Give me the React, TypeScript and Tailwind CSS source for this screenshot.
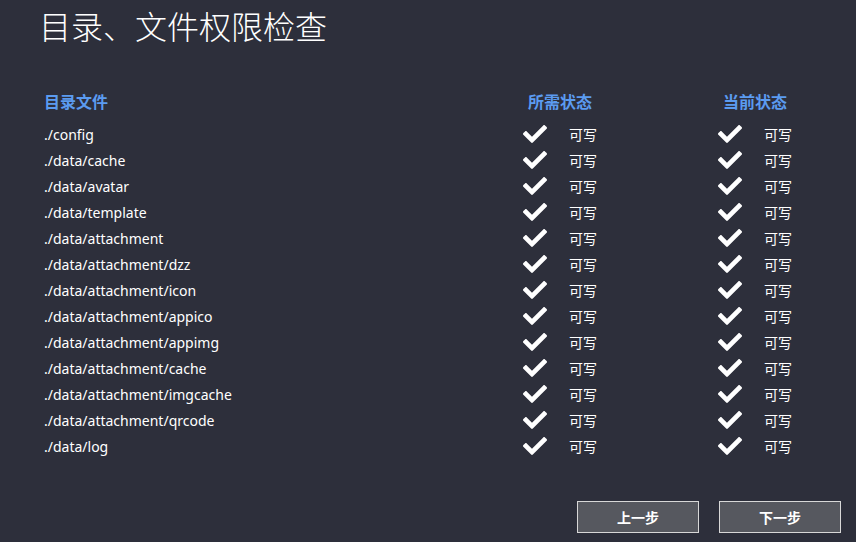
import React from "react";
import { FaCheck } from "react-icons/fa";

const files = [
  "./config",
  "./data/cache",
  "./data/avatar",
  "./data/template",
  "./data/attachment",
  "./data/attachment/dzz",
  "./data/attachment/icon",
  "./data/attachment/appico",
  "./data/attachment/appimg",
  "./data/attachment/cache",
  "./data/attachment/imgcache",
  "./data/attachment/qrcode",
  "./data/log",
];

function Status() {
  return (
    <div className="flex items-center">
      <FaCheck className="w-[24px] h-[24px] text-white" />
      <span className="ml-[22px] text-[14px] text-white">可写</span>
    </div>
  );
}

export default function App() {
  return (
    <div
      className="w-[856px] h-[542px] bg-[#2d2f3b] text-white overflow-hidden flex flex-col"
      style={{ fontFamily: '"Noto Sans", "Noto Sans CJK SC", sans-serif' }}
    >
      <h1 className="ml-[39px] mt-[7px] text-[32px] leading-[40px] font-light text-white">
        目录、文件权限检查
      </h1>
      <div className="ml-[44px] mt-[43px] grid grid-cols-[479px_195px_1fr]">
        <div className="h-[24px] leading-[24px] text-[16px] font-bold text-[#5b9bf0]">目录文件</div>
        <div className="h-[24px] leading-[24px] pl-[5px] text-[16px] font-bold text-[#5b9bf0]">所需状态</div>
        <div className="h-[24px] leading-[24px] pl-[5px] text-[16px] font-bold text-[#5b9bf0]">当前状态</div>
      </div>
      <div className="ml-[44px] mt-[7px] flex flex-col">
        {files.map((f) => (
          <div key={f} className="grid grid-cols-[479px_195px_1fr] h-[26px] items-center">
            <div className="text-[14px] text-white">{f}</div>
            <Status />
            <Status />
          </div>
        ))}
      </div>
      <div className="mt-[42px] mr-[15px] flex justify-end gap-[20px]">
        <button className="w-[122px] h-[32px] bg-[#56585f] border border-[#d8d8d8] text-[14px] font-bold text-white">
          上一步
        </button>
        <button className="w-[122px] h-[32px] bg-[#56585f] border border-[#d8d8d8] text-[14px] font-bold text-white">
          下一步
        </button>
      </div>
    </div>
  );
}
